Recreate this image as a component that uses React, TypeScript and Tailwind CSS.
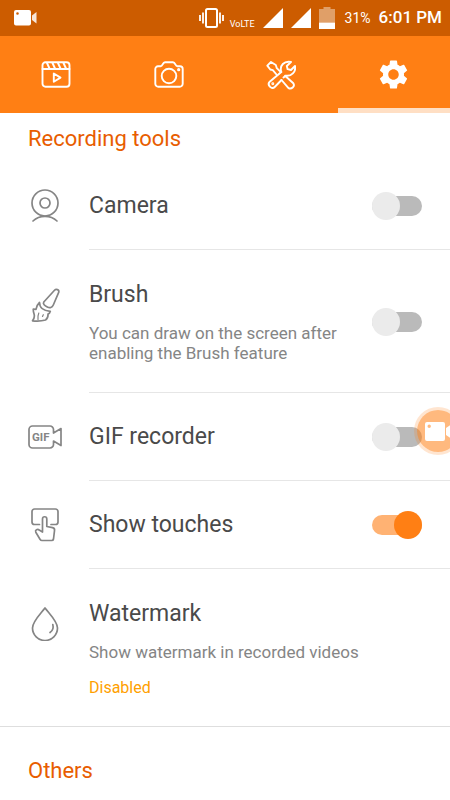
import React from 'react';
import { MdSettings } from 'react-icons/md';

const stroke = {
  fill: 'none',
  stroke: 'currentColor',
  strokeLinecap: 'round' as const,
  strokeLinejoin: 'round' as const,
};

const StatusBar: React.FC = () => (
  <div className="flex h-9 items-center bg-[#cc5c00] pl-3.5 pr-2 text-white">
    <svg className="h-4 w-6" viewBox="0 0 24 16" fill="currentColor">
      <path fillRule="evenodd" d="M2 0h13a2 2 0 0 1 2 2v11.500a2 2 0 0 1-2 2H2a2 2 0 0 1-2-2V2a2 2 0 0 1 2-2zM3.500 2.200a1.300 1.300 0 1 0 0 2.600 1.300 1.300 0 0 0 0-2.600z" />
      <path d="M18 5.500L22.500 2v11.500L18 10z" opacity="0.85" />
    </svg>
    <div className="ml-auto flex items-center">
      <svg className="h-5 w-[26px]" viewBox="0 0 26 20" {...stroke} strokeLinecap="butt" strokeWidth="2">
        <rect x="8" y="1" width="11" height="18" rx="1.500" />
        <path d="M5 4.500v11M2 7v6M22 4.500v11M25 7v6" strokeWidth="1.800" />
      </svg>
      <span className="ml-1.5 mt-3 text-[9px] leading-3">VoLTE</span>
      <svg className="ml-2 h-5 w-5" viewBox="0 0 20 20" fill="currentColor">
        <path d="M20 0v20H0z" />
      </svg>
      <svg className="ml-2 h-5 w-5" viewBox="0 0 20 20" fill="currentColor">
        <path d="M20 0v20H0z" />
      </svg>
      <svg className="ml-2 h-[22px] w-4" viewBox="0 0 16 22" fill="currentColor">
        <path d="M4.500 0h7v2H16v13.500H0V2h4.500z" fill="#e09f68" />
        <path d="M0 15.500h16V22H0z" />
      </svg>
      <span className="ml-2.5 text-sm">31%</span>
      <span className="ml-2 text-[17px] font-medium">6:01 PM</span>
    </div>
  </div>
);

const VideosIcon = () => (
  <svg className="size-[30px]" viewBox="0 0 30 30" {...stroke} strokeWidth="1.900">
    <rect x="1.500" y="2.300" width="27" height="24.500" rx="3" />
    <path d="M1.500 9h27M6 3l2.500 5.500M11.500 3L14 8.500M17 3l2.500 5.500M22.500 3L25 8.500" />
    <path d="M12.800 13.500v8.200l6.700-4.100z" />
  </svg>
);

const PhotosIcon = () => (
  <svg className="size-[30px]" viewBox="0 0 30 30" {...stroke} strokeWidth="1.900">
    <path d="M4 6.300h2.500c2.500 0 1.800-4 4.500-4h8c2.700 0 2 4 4.500 4H26a2.700 2.700 0 0 1 2.700 2.700v14.800a3 3 0 0 1-3 3H4.300a3 3 0 0 1-3-3V9A2.700 2.700 0 0 1 4 6.300z" />
    <circle cx="15" cy="16" r="7.300" />
    <circle cx="24.700" cy="9.700" r="0.700" fill="currentColor" />
  </svg>
);

const ToolsIcon = () => (
  <svg className="size-[30px]" viewBox="0 0 30 30" {...stroke} strokeWidth="1.900">
    <path d="M10.500 14.500L6.800 10.200 4.300 9.500 1.300 5.600 5 2l4.800 3 1 3.200 4 4" />
    <path d="M15.300 12C13.200 5.500 18.300 0.500 25 2L20.800 6l.8 3.200 3.400.8 4-4c1.200 5.500-3.500 10.800-9.800 9.600" />
    <path d="M15.300 12L3.700 21.700c-3 3 1.800 8.500 5 5.300L15.500 20" />
    <path d="M17.500 17.500l1.800-1.500 8 7.300c2 3-2 6.700-5 4.600L15.500 20" />
    <circle cx="6.800" cy="23.800" r="0.500" fill="currentColor" />
  </svg>
);

const tabs = [
  { label: 'Videos', icon: <VideosIcon /> },
  { label: 'Photos', icon: <PhotosIcon /> },
  { label: 'Tools', icon: <ToolsIcon /> },
  { label: 'Settings', icon: <MdSettings size={35} />, active: true },
];

const CameraIcon = () => (
  <svg className="size-[34px]" viewBox="0 0 34 34" {...stroke} strokeWidth="1.700">
    <circle cx="17" cy="14" r="13" />
    <circle cx="17" cy="14" r="5" />
    <path d="M5 32c6.500-6.300 17.500-6.300 24 0" />
  </svg>
);

const BrushIcon = () => (
  <svg className="size-[34px]" viewBox="0 0 34 34" {...stroke} strokeWidth="1.700">
    <path d="M15.800 14L26.500 2.300c1.500-1.600 4.800-.8 4.300 1.800L25.300 17c-1.200 2.800-3.500 3.300-6 2-2.500-1.200-4.800-3-3.500-5z" />
    <path d="M11.500 14.500c0 5 4 8.500 10.800 8.800-.3 1.500-1.200 2.300-2.300 2.700.2 3-.8 5-2.500 6-3.500 1-9 1.200-13 .8 2-2.500 2.300-4.500 1.500-7-.5-1.500-.8-3-.7-4.800l2.700.3c.5-2.500 1.500-5 3.500-6.800z" />
    <path d="M10 31.500c-.3-2.500 0-4.500.8-6.500M14.500 28.500l.8-1.800" strokeWidth="1.200" />
  </svg>
);

const GifIcon = () => (
  <svg className="size-[34px]" viewBox="0 0 34 34" {...stroke} strokeWidth="1.700">
    <path d="M25.500 13V9.500a3.500 3.500 0 0 0-3.500-3.500H4.500A3.500 3.500 0 0 0 1 9.500v15A3.500 3.500 0 0 0 4.500 28H22a3.500 3.500 0 0 0 3.500-3.500V21l7.500 4.500v-17L25.500 13" />
    <text x="4" y="21" fontSize="11.500" fontWeight="700" fill="currentColor" stroke="none">GIF</text>
  </svg>
);

const TouchIcon = () => (
  <svg className="size-[34px]" viewBox="0 0 34 34" {...stroke} strokeWidth="1.700">
    <path d="M11.500 16.500H6.500A2.500 2.500 0 0 1 4 14V3.500A2.500 2.500 0 0 1 6.500 1h21A2.500 2.500 0 0 1 30 3.500V14a2.500 2.500 0 0 1-2.500 2.500H23" />
    <path d="M14.500 24V11c0-3 4.300-3 4.300 0v7.500l5.700 1.200c1.500.3 2.300 1.500 2 3L25.500 31c-.2 1.200-.8 1.500-1.800 1.500H14c-1 0-1.500-.5-2-1.300L7.800 24.200c-1-2 1.700-3.700 3.400-2.200z" />
  </svg>
);

const DropIcon = () => (
  <svg className="size-[34px]" viewBox="0 0 34 34" {...stroke} strokeWidth="1.700">
    <path d="M17 1C11.500 8 4.500 14.500 4.500 21a12.500 12.500 0 0 0 25 0C29.500 14.500 22.500 8 17 1z" />
    <path d="M24.800 17.500c.8 3-.2 6.300-2.800 8" />
  </svg>
);

type SwitchProps = { id: string; defaultChecked?: boolean };

const Switch: React.FC<SwitchProps> = ({ id, defaultChecked }) => (
  <span className="relative flex h-7 w-[50px] shrink-0 items-center">
    <input
      id={id}
      type="checkbox"
      role="switch"
      defaultChecked={defaultChecked}
      className="peer h-5 w-full cursor-pointer appearance-none rounded-full bg-[#bababa] checked:bg-[#ffb273]"
    />
    <span className="pointer-events-none absolute left-0 size-7 rounded-full bg-[#ebebeb] peer-checked:left-auto peer-checked:right-0 peer-checked:bg-[#ff7f14]" />
  </span>
);

type RowProps = {
  id: string;
  title: string;
  icon: React.ReactNode;
  checked?: boolean;
};

const Row: React.FC<RowProps> = ({ id, title, icon, checked }) => (
  <div className="flex items-center pl-7 text-[#858585]">
    {icon}
    <div className="ml-[27px] flex flex-1 items-center justify-between border-b border-[#e6e6e6] py-[29px] pr-7">
      <label htmlFor={id} className="text-[23px] leading-[29px] text-[#4a4a4a]">{title}</label>
      <Switch id={id} defaultChecked={checked} />
    </div>
  </div>
);

const App: React.FC = () => {
  return (
    <div className="relative min-h-screen overflow-hidden bg-white font-['Roboto',sans-serif]">
      <StatusBar />

      <nav className="flex h-[77px] bg-[#ff7f14] text-white">
        {tabs.map((tab) => (
          <button
            key={tab.label}
            type="button"
            aria-label={tab.label}
            className={`flex flex-1 items-center justify-center border-[#ffdfc4] ${tab.active ? 'border-b-[5px] pt-1' : ''}`}
          >
            {tab.icon}
          </button>
        ))}
      </nav>

      <main>
        <h2 className="px-7 pt-3 text-[22px] leading-7 text-[#e85d00]">Recording tools</h2>

        <div className="pt-[9px]">
          <Row id="camera" title="Camera" icon={<CameraIcon />} />

          <div className="flex items-start pl-7 text-[#858585]">
            <span className="mt-[38px]"><BrushIcon /></span>
            <div className="ml-[27px] flex flex-1 items-center justify-between border-b border-[#e6e6e6] pb-[29px] pr-7 pt-[30px]">
              <div>
                <label htmlFor="brush" className="block text-[23px] leading-[29px] text-[#4a4a4a]">Brush</label>
                <p className="mt-3.5 max-w-[260px] text-[17px] leading-5">
                  You can draw on the screen after enabling the Brush feature
                </p>
              </div>
              <Switch id="brush" />
            </div>
          </div>

          <Row id="gif" title="GIF recorder" icon={<GifIcon />} />
          <Row id="touches" title="Show touches" icon={<TouchIcon />} checked />

          <div className="flex items-start border-b border-[#dedede] pl-7 text-[#858585]">
            <span className="mt-[38px]"><DropIcon /></span>
            <div className="ml-[27px] flex-1 pb-7 pt-[30px]">
              <h3 className="text-[23px] leading-[29px] text-[#4a4a4a]">Watermark</h3>
              <p className="mt-3.5 text-[17px] leading-5">Show watermark in recorded videos</p>
              <p className="mt-4 text-base leading-5 text-[#ffa000]">Disabled</p>
            </div>
          </div>
        </div>

        <h2 className="px-7 pt-[30px] text-[22px] leading-7 text-[#e85d00]">Others</h2>
      </main>

      {/* Floating record bubble, half docked on the right edge */}
      <button
        type="button"
        aria-label="Record"
        className="absolute -right-3 top-[407px] flex size-12 items-center justify-center rounded-full border-[3px] border-[#ff7f14]/20 bg-[#ff7f14]/55 bg-clip-padding text-white"
      >
        <svg className="h-[19px] w-[26px]" viewBox="0 0 26 19" fill="currentColor">
          <path fillRule="evenodd" d="M2 0h16a2 2 0 0 1 2 2v15a2 2 0 0 1-2 2H2a2 2 0 0 1-2-2V2a2 2 0 0 1 2-2zM4.200 2.500a1.700 1.700 0 1 0 0 3.400 1.700 1.700 0 0 0 0-3.400z" />
          <path d="M21 6l5-3.500v14L21 13z" />
        </svg>
      </button>
    </div>
  );
};

export default App;
